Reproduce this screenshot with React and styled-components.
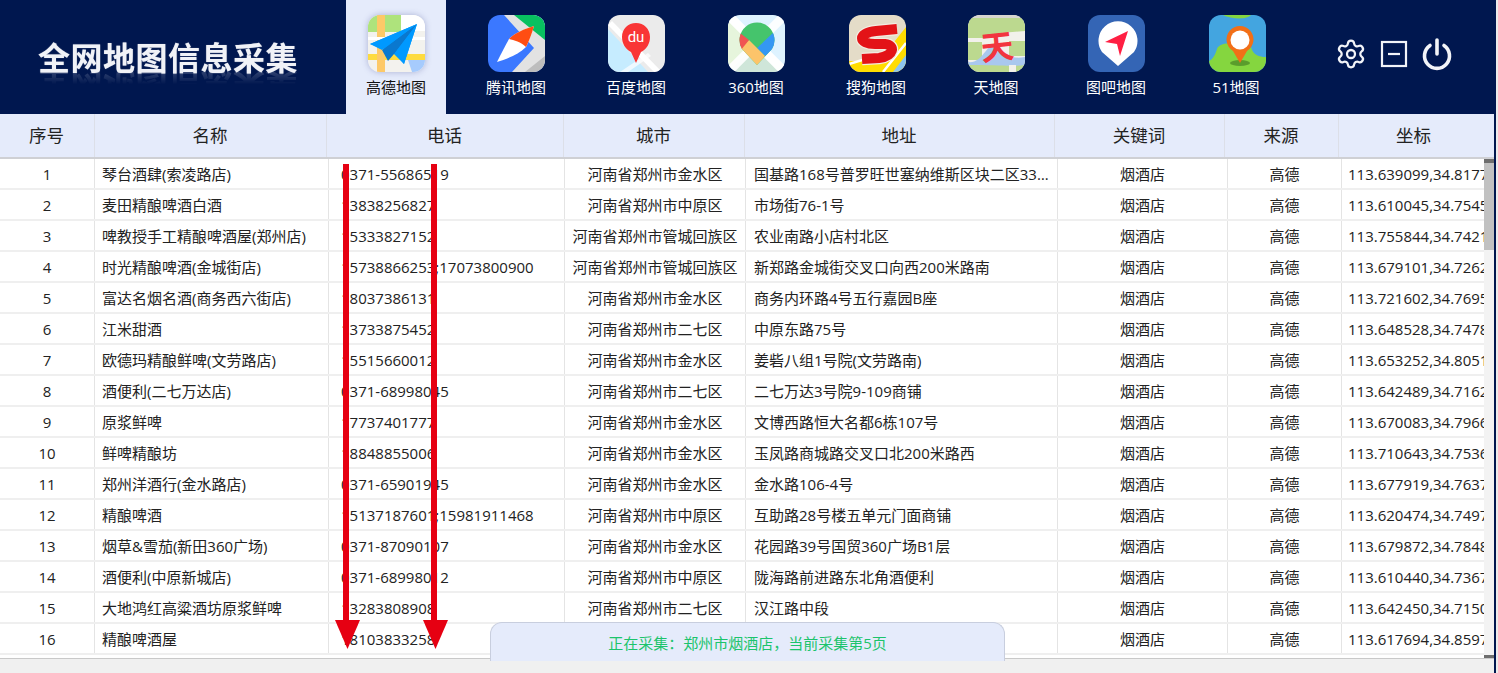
import React from 'react';
import styled, { createGlobalStyle } from 'styled-components';
import { Settings } from 'lucide-react';

const Global = createGlobalStyle`
  html, body { margin: 0; padding: 0; background: #ececec; overflow: hidden; }
  body { font-family: "Open Sans", "Noto Sans CJK SC", sans-serif; }
  * { box-sizing: border-box; }
`;

const NAVY = '#00174f';
const HEAD = '#e5ebfb';

const Page = styled.div`
  width: 1498px; height: 673px; overflow: hidden; background: #ececec;
`;
const Main = styled.div`
  position: relative; width: 1496px; height: 673px;
  border-right: 2px solid ${NAVY};
  display: flex; flex-direction: column;
`;
const Header = styled.header`
  height: 114px; flex: none; background: ${NAVY};
  display: flex; align-items: stretch;
`;
const Brand = styled.div`
  width: 346px; flex: none; display: flex; align-items: center; padding: 0 0 3px 38px;
`;
const BrandText = styled.h1`
  margin: 0; color: #f0f2f7; font-size: 32px; line-height: 34px; font-weight: 700;
  font-family: "Noto Sans CJK SC", sans-serif;
  letter-spacing: 0.5px; white-space: nowrap;
  text-shadow: 0 0 1px rgba(255,255,255,.5);
  -webkit-box-reflect: below -3px linear-gradient(transparent 58%, rgba(255,255,255,.22));
`;
const Tabs = styled.nav`
  display: flex; gap: 20px;
`;
const Tab = styled.div`
  width: 100px; display: flex; flex-direction: column; align-items: center;
  padding-top: 15px;
  background: ${p => (p.$active ? HEAD : 'transparent')};
  color: ${p => (p.$active ? '#111' : '#fff')};
`;
const IconWrap = styled.div`
  width: 57px; height: 57px; margin-left: ${p => p.$shift || 0}px; flex: none;
  border-radius: 12px;
  box-shadow: ${p => (p.$active ? '0 0 6px rgba(60,70,140,.35)' : 'none')};
`;
const TabLabel = styled.span`
  font-size: 15px; line-height: 20px; margin-top: 5px; white-space: nowrap;
`;
const Actions = styled.div`
  margin-left: 49px; display: flex; align-items: center; gap: 13px; color: #f2f4f8;
  padding-bottom: 7px;
`;
const ActionIcon = styled.svg`
  display: block; flex: none;
`;

const HeadRow = styled.div`
  height: 45px; flex: none; background: ${HEAD}; border-bottom: 2px solid #cfd0d4;
  display: grid; grid-template-columns: 95px 232px 237px 181px 310px 170px 114px 155px;
`;
const HeadCell = styled.div`
  display: flex; align-items: center; justify-content: center;
  font-size: 17.5px; color: #222; padding-bottom: 3px;
  padding-right: ${p => (p.$last ? 6 : 1)}px;
  border-right: ${p => (p.$last ? 'none' : '1px solid #dcdfe8')};
`;
const BodyWrap = styled.div`
  height: 500px; flex: none; display: flex; background: #fff; border-bottom: 1px solid #c9c9c9;
`;
const Rows = styled.div`
  width: 1484px; flex: none; overflow: hidden;
`;
const Row = styled.div`
  height: 31px; display: grid; border-bottom: 2px solid #efefef;
  grid-template-columns: 95px 234px 236px 181px 312px 170px 114px 142px;
`;
const Cell = styled.div`
  font-size: 15px; line-height: 30px; height: 29px; color: #222; white-space: nowrap; overflow: hidden;
  text-overflow: ${p => (p.$clip ? 'clip' : 'ellipsis')};
  text-align: ${p => (p.$left !== undefined ? 'left' : 'center')};
  padding-left: ${p => p.$left || 0}px;
  padding-right: ${p => (p.$left !== undefined && !p.$clip ? 5 : 0)}px;
  border-right: ${p => (p.$clip ? 'none' : '1px solid #e4e4e4')};
`;
const Scrollbar = styled.div`
  width: 10px; flex: none; background: #f3f3f3; display: flex; flex-direction: column;
`;
const ScrollCap = styled.div`
  height: ${p => p.$h}px; flex: none; background: #6e6e6e;
`;
const ScrollThumb = styled.div`
  height: 87px; flex: none; background: #c1c1c1;
`;
const ScrollGap = styled.div`
  flex: 1;
`;
const BottomBar = styled.div`
  flex: 1; background: #f0f0f0;
`;
const StatusPill = styled.div`
  position: absolute; left: 490px; top: 622px; width: 515px; height: 39px;
  background: ${HEAD}; border: 1px solid #c8cede; border-bottom: none;
  border-radius: 12px 12px 0 0;
  display: flex; align-items: center; justify-content: center;
  color: #1cc46c; font-size: 15px;
`;
const Arrow = styled.svg`
  position: absolute; left: ${p => p.$x}px; top: 164px; pointer-events: none;
`;

function Clip({ id, children }) {
  return (
    <svg width="57" height="57" viewBox="0 0 57 57" style={{ display: 'block' }}>
      <defs><clipPath id={id}><rect width="57" height="57" rx="12" /></clipPath></defs>
      <g clipPath={`url(#${id})`}>{children}</g>
    </svg>
  );
}

const Gaode = () => (
  <Clip id="c1">
    <rect width="57" height="57" fill="#f3f2ee" />
    <rect width="34" height="17" fill="#aee37c" />
    <rect x="34" width="23" height="16" fill="#fff" />
    <rect y="39" width="57" height="6" fill="#fedb3f" />
    <rect x="9" width="8" height="57" fill="#fdc968" />
    <rect x="33" width="4" height="40" fill="#fff" />
    <rect y="22" width="57" height="3" fill="#fff" />
    <polygon points="40,45 57,45 57,57 44,57" fill="#a6cbfd" />
    <polygon points="2,29 49,9 36,49 23,36" fill="#0099ff" />
    <polygon points="49,9 14,35 20,46 26,39" fill="#0a78cf" />
    <polygon points="49,9 14,35 2,29" fill="#0099ff" />
    <polygon points="49,9 27,38 36,49" fill="#0099ff" />
  </Clip>
);
const Tencent = () => (
  <Clip id="c2">
    <rect width="57" height="57" fill="#3b78ff" />
    <polygon points="16,0 57,0 57,57 24,57 46,33" fill="#e2e2e2" />
    <polygon points="26,0 57,0 57,25" fill="#08c160" />
    <polygon points="57,41 57,57 37,57" fill="#bdbdbd" />
    <path d="M46 11 C36 14 27 18 21 24 C17 31 13 39 9 47 C18 44 30 40 38 32 C41 26 44 18 46 11Z" fill="#fff" />
    <path d="M46 11 C36 14 27 18 21 24 C26 25 33 27 38 32 C41 26 44 18 46 11Z" fill="#ff4d12" />
  </Clip>
);
const Baidu = () => (
  <Clip id="c3">
    <rect width="57" height="57" fill="#ebebeb" />
    <polygon points="0,14 0,57 40,57" fill="#c6ecff" />
    <polygon points="0,10 4,6 54,57 46,57" fill="#fff" />
    <polygon points="12,57 40,38 43,41 20,57" fill="#fff" opacity=".7" />
    <path d="M28 48 L23 37 C17 34 14 28 14 22 C14 14 20 8 28 8 C36 8 42 14 42 22 C42 28 39 34 33 37Z" fill="#f93535" />
    <text x="28" y="27" textAnchor="middle" fontSize="15" fontFamily="Roboto, sans-serif" fill="#fff">du</text>
  </Clip>
);
const Map360 = () => (
  <Clip id="c4">
    <rect width="57" height="57" fill="#def3ff" />
    <polygon points="0,0 0,57 28,28" fill="#e6f5dc" />
    <polygon points="0,57 57,57 28,30" fill="#cfe6d9" />
    <path d="M0 0 L57 57" stroke="#fff" strokeWidth="9" />
    <path d="M0 57 L57 0" stroke="#fff" strokeWidth="9" opacity=".9" />
    <defs>
      <clipPath id="pin360"><path d="M29 50 L14 34 A17.5 17.5 0 1 1 44 34 Z" /></clipPath>
    </defs>
    <g clipPath="url(#pin360)">
      <rect width="57" height="57" fill="#45c46c" />
      <polygon points="47,16 52,30 37,41 29,33" fill="#3497f3" />
      <polygon points="21,25 37,41 29,52 10,35" fill="#fcc46a" />
      <polygon points="12,18 21,25 13,35 8,28" fill="#f05552" />
    </g>
  </Clip>
);
const Sogou = () => (
  <Clip id="c5">
    <rect width="57" height="57" fill="#e4dcc8" />
    <polygon points="57,12 57,57 0,57 0,46 30,46" fill="#ffdc00" />
    <polygon points="57,0 57,8 52,0" fill="#9ac43c" />
    <polygon points="57,40 57,57 44,57" fill="#8cc4ee" />
    <path d="M0 49 L36 38 M34 57 L57 28" stroke="#fff" strokeWidth="2.5" />
    <path d="M48 14 L27 16 C8 18 9 29 26 29 L36 29 C47 30 45 41 30 43 L13 44" fill="none" stroke="#f3ece0" strokeWidth="12.5" />
    <path d="M48 14 L27 16 C8 18 9 29 26 29 L36 29 C47 30 45 41 30 43 L13 44" fill="none" stroke="#e31317" strokeWidth="10" />
  </Clip>
);
const Tian = () => (
  <Clip id="c6">
    <rect width="57" height="57" fill="#f2f1eb" />
    <rect width="57" height="3" fill="#d6d6d0" />
    <polygon points="0,3 57,3 57,16 33,18 18,23 0,23" fill="#bcd98f" />
    <rect y="27" width="14" height="18" fill="#bcd98f" />
    <rect x="41" y="26" width="16" height="15" fill="#bcd98f" />
    <rect y="48" width="57" height="9" fill="#bcd98f" />
    <path d="M0 47 C14 49 18 30 26 30 C34 30 34 46 57 42 V50 C44 52 30 50 0 50Z" fill="#a9c8ee" />
    <rect x="41" y="50" width="7" height="7" fill="#f2f1eb" />
    <text x="29" y="44" textAnchor="middle" fontSize="33" fontWeight="700" fill="#f2353f" transform="rotate(-6 29 30)" fontFamily='"Noto Sans CJK SC", sans-serif'>天</text>
  </Clip>
);
const Tuba = () => (
  <Clip id="c7">
    <rect width="57" height="57" fill="#3465b5" />
    <path d="M30 51 L14 37 A19.5 19.5 0 1 1 46 37Z" fill="#fff" />
    <polygon points="40,16 17,27 29,29 32,41" fill="#ff1f43" />
  </Clip>
);
const Map51 = () => (
  <Clip id="c8">
    <rect width="57" height="57" fill="#43a5e0" />
    <path d="M14 0 C22 4 38 5 42 0Z" fill="#85d63f" />
    <path d="M0 57 V46 C4 44 6 40 8 34 C9 30 16 28 22 28 C30 30 34 26 42 32 C44 40 50 42 57 42 V57Z" fill="#85d63f" />
    <ellipse cx="31" cy="48" rx="10" ry="3" fill="#4f8f28" opacity=".8" />
    <path d="M31 48 L24 36 A13.5 13.5 0 1 1 38 36Z" fill="#f26f17" />
    <circle cx="31" cy="25" r="9.5" fill="#fff" />
  </Clip>
);

const tabs = [
  ['高德地图', Gaode, 0], ['腾讯地图', Tencent, 0], ['百度地图', Baidu, 0], ['360地图', Map360, 0],
  ['搜狗地图', Sogou, 3], ['天地图', Tian, 0], ['图吧地图', Tuba, 0], ['51地图', Map51, 3],
];
const heads = ['序号', '名称', '电话', '城市', '地址', '关键词', '来源', '坐标'];
const JS = '河南省郑州市金水区', ZY = '河南省郑州市中原区', EQ = '河南省郑州市二七区', GC = '河南省郑州市管城回族区';
const rows = [
  ['琴台酒肆(索凌路店)', '0371-55686519', JS, '国基路168号普罗旺世塞纳维斯区块二区33号楼底商铺', '113.639099,34.81773'],
  ['麦田精酿啤酒白酒', '13838256827', ZY, '市场街76-1号', '113.610045,34.75452'],
  ['啤教授手工精酿啤酒屋(郑州店)', '15333827152', GC, '农业南路小店村北区', '113.755844,34.74212'],
  ['时光精酿啤酒(金城街店)', '15738866253;17073800900', GC, '新郑路金城街交叉口向西200米路南', '113.679101,34.72620'],
  ['富达名烟名酒(商务西六街店)', '18037386131', JS, '商务内环路4号五行嘉园B座', '113.721602,34.76953'],
  ['江米甜酒', '13733875452', EQ, '中原东路75号', '113.648528,34.74780'],
  ['欧德玛精酿鲜啤(文劳路店)', '15515660012', JS, '姜砦八组1号院(文劳路南)', '113.653252,34.80516'],
  ['酒便利(二七万达店)', '0371-68998045', EQ, '二七万达3号院9-109商铺', '113.642489,34.71624'],
  ['原浆鲜啤', '17737401777', JS, '文博西路恒大名都6栋107号', '113.670083,34.79661'],
  ['鲜啤精酿坊', '18848855006', JS, '玉凤路商城路交叉口北200米路西', '113.710643,34.75360'],
  ['郑州洋酒行(金水路店)', '0371-65901945', JS, '金水路106-4号', '113.677919,34.76374'],
  ['精酿啤酒', '15137187601;15981911468', ZY, '互助路28号楼五单元门面商铺', '113.620474,34.74979'],
  ['烟草&雪茄(新田360广场)', '0371-87090107', JS, '花园路39号国贸360广场B1层', '113.679872,34.78486'],
  ['酒便利(中原新城店)', '0371-68998012', ZY, '陇海路前进路东北角酒便利', '113.610440,34.73677'],
  ['大地鸿红高粱酒坊原浆鲜啤', '13283808908', EQ, '汉江路中段', '113.642450,34.71505'],
  ['精酿啤酒屋', '18103833258', JS, '', '113.617694,34.85975'],
];

function RedArrow({ x }) {
  return (
    <Arrow $x={x} width="25" height="485" viewBox="0 0 25 485">
      <rect x="8" y="0" width="6" height="457" fill="#e60012" />
      <polygon points="0,456 25,456 12.5,485" fill="#e60012" />
    </Arrow>
  );
}

export default function App() {
  return (
    <Page>
      <Global />
      <Main>
        <Header>
          <Brand><BrandText>全网地图信息采集</BrandText></Brand>
          <Tabs>
            {tabs.map(([label, Icon, shift], i) => (
              <Tab key={label} $active={i === 0}>
                <IconWrap $active={i === 0} $shift={shift}><Icon /></IconWrap>
                <TabLabel>{label}</TabLabel>
              </Tab>
            ))}
          </Tabs>
          <Actions>
            <Settings size={32} strokeWidth={1.7} />
            <ActionIcon width="28" height="28" viewBox="0 0 28 28" fill="none" stroke="currentColor" strokeWidth="2.2">
              <rect x="2" y="2" width="24" height="24" />
              <path d="M8 14 H20" />
            </ActionIcon>
            <ActionIcon width="32" height="34" viewBox="0 0 32 34" fill="none" stroke="currentColor" strokeWidth="3.6" strokeLinecap="round">
              <path d="M16 3 V17" />
              <path d="M9 8.5 A12.5 12.5 0 1 0 23 8.5" />
            </ActionIcon>
          </Actions>
        </Header>
        <HeadRow>
          {heads.map((h, i) => <HeadCell key={h} $last={i === heads.length - 1}>{h}</HeadCell>)}
        </HeadRow>
        <BodyWrap>
          <Rows>
            {rows.map((r, i) => (
              <Row key={i}>
                <Cell>{i + 1}</Cell>
                <Cell $left={7}>{r[0]}</Cell>
                <Cell $left={12}>{r[1]}</Cell>
                <Cell>{r[2]}</Cell>
                <Cell $left={8}>{r[3]}</Cell>
                <Cell>烟酒店</Cell>
                <Cell>高德</Cell>
                <Cell $left={6} $clip>{r[4]}</Cell>
              </Row>
            ))}
          </Rows>
          <Scrollbar>
            <ScrollCap $h={4} />
            <ScrollThumb />
            <ScrollGap />
            <ScrollCap $h={3} />
          </Scrollbar>
        </BodyWrap>
        <BottomBar />
        <StatusPill>正在采集：郑州市烟酒店，当前采集第5页</StatusPill>
        <RedArrow x={335} />
        <RedArrow x={423} />
      </Main>
    </Page>
  );
}
